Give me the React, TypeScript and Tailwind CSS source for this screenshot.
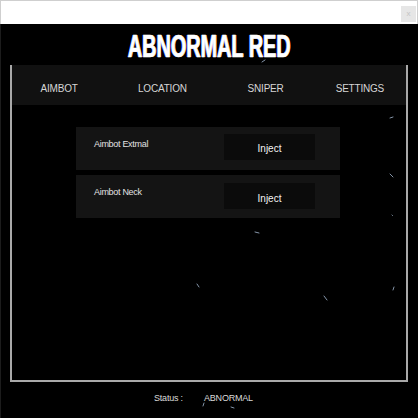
import React from "react";

const tabs = ["AIMBOT", "LOCATION", "SNIPER", "SETTINGS"];

function Card({ label, second }: { label: string; second?: boolean }) {
  return (
    <div className="w-[264px] h-[43px] bg-[#141414] flex items-start">
      <div className="pl-[18px] pt-[11px] w-[148px] text-[9px] tracking-[-0.3px] leading-[12px] text-[#e2e2e2]">
        {label}
      </div>
      <div
        className={
          "w-[91px] h-[26px] bg-[#0b0b0b] flex items-center justify-center text-[10px] text-[#f2f2f2] " +
          (second ? "mt-[8px] pt-[4px]" : "mt-[7px] pt-[2px]")
        }
      >
        Inject
      </div>
    </div>
  );
}

export default function App() {
  return (
    <div
      className="relative w-[418px] h-[418px] bg-black flex flex-col overflow-hidden"
      style={{ fontFamily: '"Liberation Sans", Arial, sans-serif' }}
    >
      {/* title bar */}
      <div className="h-[24px] bg-white border-l border-t border-r border-[#cfcfcf] flex justify-end items-start pt-[5px] pr-[1px]">
        <div className="w-[15px] h-[16px] bg-[#e6e6e6] flex items-center justify-center text-[8px] leading-none text-[#c4c4c4]">
          x
        </div>
      </div>

      {/* body */}
      <div className="flex-1 flex flex-col border-l border-[#1c1c1c]">
        <div className="h-[41px] flex justify-center pt-[7px]">
          <div className="text-[31px] leading-[31px] font-black text-white scale-x-[0.64] whitespace-nowrap [-webkit-text-stroke:0.6px_white] [text-shadow:-1px_0_0_#3a5cff,1px_0_0_#e0b060]">
            ABNORMAL RED
          </div>
        </div>

        <div className="ml-[9px] w-[398px] h-[317px] border-2 border-t-0 border-[#a9a9a9] flex flex-col">
          <div className="h-[40px] bg-[#111111] flex items-center pt-[6px] pl-[1px]">
            {tabs.map((t, i) => (
              <div
                key={t}
                className={
                  "w-[99px] text-center text-[10px] tracking-[-0.2px] text-[#d6d6d6] " +
                  (i === 0 ? "pr-[6px]" : i === 1 ? "pl-[4px]" : i === 2 ? "pl-[14px]" : "pl-[6px]")
                }
              >
                {t}
              </div>
            ))}
          </div>
          <div className="pl-[64px] pt-[22px] flex flex-col gap-[5px]">
            <Card label="Aimbot Extmal" />
            <Card label="Aimbot Neck" second />
          </div>
        </div>

        <div className="flex pt-[10px] pl-[153px] text-[9px] tracking-[-0.2px] text-[#dadada] leading-[12px]">
          <span className="w-[50px]">Status :</span>
          <span>ABNORMAL</span>
        </div>
      </div>

      {/* specks */}
      <svg
        className="absolute inset-0 pointer-events-none"
        width="418"
        height="418"
        viewBox="0 0 418 418"
      >
        <g stroke="#8494a8" strokeWidth="1" strokeLinecap="round">
          <line x1="262" y1="62" x2="265" y2="60" />
          <line x1="390" y1="118" x2="393" y2="117" />
          <line x1="390" y1="174" x2="393" y2="177" />
          <line x1="392" y1="215" x2="392.5" y2="215.5" />
          <line x1="255" y1="232" x2="259" y2="233" />
          <line x1="197" y1="284" x2="199" y2="287" />
          <line x1="324" y1="296" x2="327" y2="300" />
          <line x1="393" y1="290" x2="394" y2="287" />
          <line x1="203" y1="406" x2="204" y2="403" />
          <line x1="231" y1="407" x2="234" y2="408" />
        </g>
      </svg>
    </div>
  );
}
